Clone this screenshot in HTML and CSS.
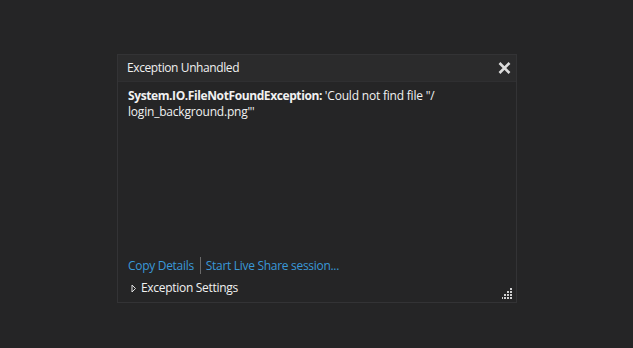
FILE: index.html
```html
<!DOCTYPE html>
<html lang="en">
<head>
  <meta charset="UTF-8" />
  <title>Exception Unhandled</title>
  <link rel="stylesheet" href="styles.css">
</head>
<body>
  <div class="dialog">
    <div class="titlebar">
      <span class="title">Exception Unhandled</span>
      <span class="close">
        <svg width="13" height="12" viewBox="0 0 13 12"><path d="M1.5 1 L11.5 11 M11.5 1 L1.5 11" stroke="#dcdcdc" stroke-width="2.6"/></svg>
      </span>
    </div>
    <div class="content">
      <div class="message"><b>System.IO.FileNotFoundException:</b> 'Could not find file "/<br>login_background.png"'</div>
      <div class="links">
        <a>Copy Details</a><span class="sep"></span><a>Start Live Share session...</a>
      </div>
      <div class="settings">
        <svg width="6" height="9" viewBox="0 0 6 9"><path d="M1 1 L4.5 4.5 L1 8 Z" fill="none" stroke="#e0e0e0" stroke-width="1"/></svg>
        <span>Exception Settings</span>
      </div>
      <div class="grip">
        <svg width="11" height="11" viewBox="0 0 11 11" fill="#d0d0d0">
          <rect x="8" y="0" width="2" height="2"/>
          <rect x="5" y="3" width="2" height="2"/><rect x="8" y="3" width="2" height="2"/>
          <rect x="2" y="6" width="2" height="2"/><rect x="5" y="6" width="2" height="2"/><rect x="8" y="6" width="2" height="2"/>
          <rect x="-1" y="9" width="2" height="2"/><rect x="2" y="9" width="2" height="2"/><rect x="5" y="9" width="2" height="2"/><rect x="8" y="9" width="2" height="2"/>
        </svg>
      </div>
    </div>
  </div>
</body>
</html>
```

FILE: styles.css
```css
html, body {
  margin: 0; padding: 0; height: 100%;
  background: #252526;
  font-family: "Open Sans", "Noto Sans", sans-serif;
  color: #f1f1f1;
}

body {
  padding-top: 54px; padding-left: 117px;
  box-sizing: border-box;
}

.dialog {
  width: 400px; height: 249px;
  background: #2b2b2c;
  border: 1px solid #333335;
  box-sizing: border-box;
  display: flex; flex-direction: column;
}

.titlebar {
  height: 26px; flex: none;
  display: flex; align-items: center; justify-content: space-between;
  padding: 0 4px 0 9px;
}

.title { font-size: 12px; color: #f0f0f0; letter-spacing: -0.4px; margin-top: -2px; }

.close { display: flex; width: 16px; justify-content: center; margin-top: -1px; }

.content {
  flex: 1;
  background: #252526;
  border-top: 1px solid #2f2f31;
  padding: 6px 10px 0 10px;
  display: flex; flex-direction: column;
  position: relative;
}

.message {
  font-size: 12px; line-height: 16px; color: #f1f1f1;
  letter-spacing: -0.2px;
}
.message b { font-weight: 700; letter-spacing: -0.4px; }

.links {
  margin-top: auto;
  display: flex; align-items: center;
  font-size: 12px; line-height: 16px;
  letter-spacing: -0.3px;
}
.links a { color: #3a98d8; }
.sep {
  width: 1px; height: 17px; background: #6a6a6a;
  margin: 0 5px 0 6px;
}

.settings {
  display: flex; align-items: center; gap: 4px;
  font-size: 12px; line-height: 16px;
  letter-spacing: -0.3px;
  margin: 6px 0 6px 3px;
}

.grip {
  position: absolute; right: 3px; bottom: 3px;
  display: flex;
}
```
